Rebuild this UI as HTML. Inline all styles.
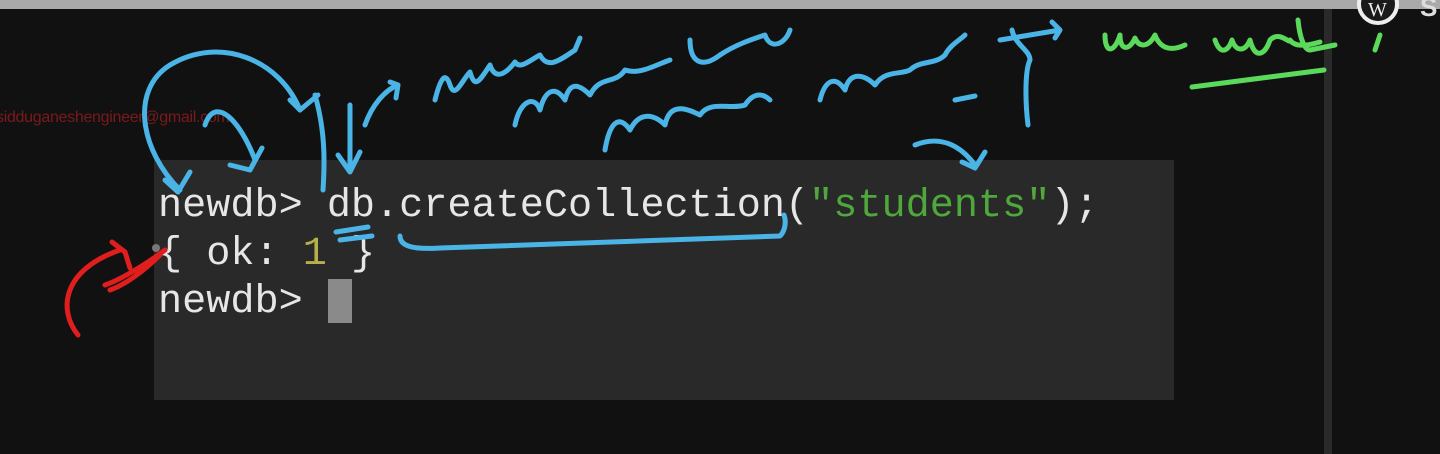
<!DOCTYPE html>
<html><head><meta charset="utf-8"><style>
html,body{margin:0;padding:0;width:1440px;height:454px;overflow:hidden;background:#111112;position:relative;font-family:"Liberation Sans",sans-serif}
.top{position:absolute;left:0;top:0;width:1440px;height:9px;background:#a9a9a9}
.vl{position:absolute;left:1324px;top:9px;width:8px;height:445px;background:#2a2a2a}
.term{position:absolute;left:154px;top:160px;width:1020px;height:240px;background:#292929}
.line{position:absolute;left:158px;font-family:"Liberation Mono",monospace;font-size:40.2px;color:#e6e6e6;white-space:pre;line-height:48px}
.email{position:absolute;left:-4px;top:109px;font-size:16px;color:#7a1a1a;letter-spacing:-0.3px}
.cur{position:absolute;left:328px;top:279px;width:24px;height:44px;background:#8a8a8a}
svg{position:absolute;left:0;top:0}
</style></head><body>
<div class="top"></div>
<div class="vl"></div>
<div class="email">sidduganeshengineer@gmail.com</div>
<div class="term"></div>
<div class="line" style="top:183px">newdb&gt; db.createCollection(<span style="color:#4ea83c">"students"</span>);</div>
<div class="line" style="top:231px">{ ok: <span style="color:#b7b04a">1</span> }</div>
<div class="line" style="top:279px">newdb&gt; </div>
<div class="cur"></div>
<svg width="1440" height="454" fill="none" stroke-linecap="round" stroke-linejoin="round">
<g stroke="#4ab4e6" stroke-width="5">
<path d="M180 190 C140 150,130 90,170 65 C220 35,280 60,300 110"/>
<path d="M165 180 L178 192 L190 172"/>
<path d="M290 100 L300 110 L318 95"/>
<path d="M205 125 C215 95,240 120,255 160"/>
<path d="M230 165 L250 170 L262 148"/>
<path d="M315 95 C325 130,325 160,323 190"/>
<path d="M350 105 L350 170 M338 155 L350 172 L360 152"/>
<path d="M365 125 C372 105,385 90,398 85 M390 82 L398 85 L396 98"/>
<path d="M435 100 C440 80,445 70,450 85 C455 100,462 80,470 72 C475 90,480 80,490 65 C495 80,505 75,515 62 C520 70,530 60,540 55 C548 70,560 60,575 50 L580 38"/>
<path d="M515 125 C520 100,535 95,540 110 C545 90,555 85,565 100 C570 80,580 85,590 95 C600 75,615 85,625 70 C640 75,655 65,670 60 M690 40 C690 60,700 70,720 55 C735 45,750 40,765 35 C770 50,785 45,790 30"/>
<path d="M605 150 C610 120,620 115,630 130 C640 110,655 115,665 125 C670 100,690 110,700 115 C710 100,730 110,745 105 C755 90,765 95,770 100"/>
<path d="M820 100 C825 80,835 75,845 90 C850 70,865 75,875 85 C885 70,900 75,910 70 C920 60,935 65,945 55 C950 45,960 40,965 35 M955 100 L975 96"/>
<path d="M340 240 L372 236 M336 232 L368 227"/>
<path d="M400 236 C400 245,410 250,440 248 L780 236 C786 230,786 220,784 215"/>
<path d="M915 145 C940 135,960 145,975 165 M962 162 L975 168 L985 152"/>
<path d="M1012 30 C1015 45,1030 50,1030 60 C1025 70,1025 100,1028 125"/>
<path d="M1000 40 L1060 30 M1052 22 L1060 30 L1055 38"/>
</g>
<g stroke="#5bd95a" stroke-width="5">
<path d="M1105 35 C1105 55,1115 52,1120 35 C1120 52,1130 50,1135 38 C1140 50,1150 45,1155 35 C1160 48,1170 52,1185 45"/>
<path d="M1215 40 C1220 55,1228 52,1232 40 C1236 52,1245 52,1250 40 C1255 60,1265 55,1270 40 C1280 30,1290 45,1290 40 C1295 48,1310 45,1320 42 M1298 20 C1300 40,1305 50,1310 50 L1335 45"/>
<path d="M1380 35 L1375 50"/>
<path d="M1192 87 L1324 70"/>
</g>
<g stroke="#e01e1e" stroke-width="5">
<path d="M78 335 C58 310,62 270,120 250 M112 242 L125 252 L130 268"/>
<path d="M105 285 C120 280,145 265,165 250 M110 290 C125 285,145 270,160 255"/>
</g>
<circle cx="156" cy="248" r="4" fill="#777"/>
<circle cx="1378" cy="4" r="19" fill="#1a1a1a" stroke="#eee" stroke-width="4"/>
<text x="1368" y="16" font-family="Liberation Serif" font-size="20" fill="#eee">W</text>
<text x="1420" y="16" font-family="Liberation Sans" font-weight="bold" font-size="26" fill="#ddd">S</text>
</svg>
</body></html>
